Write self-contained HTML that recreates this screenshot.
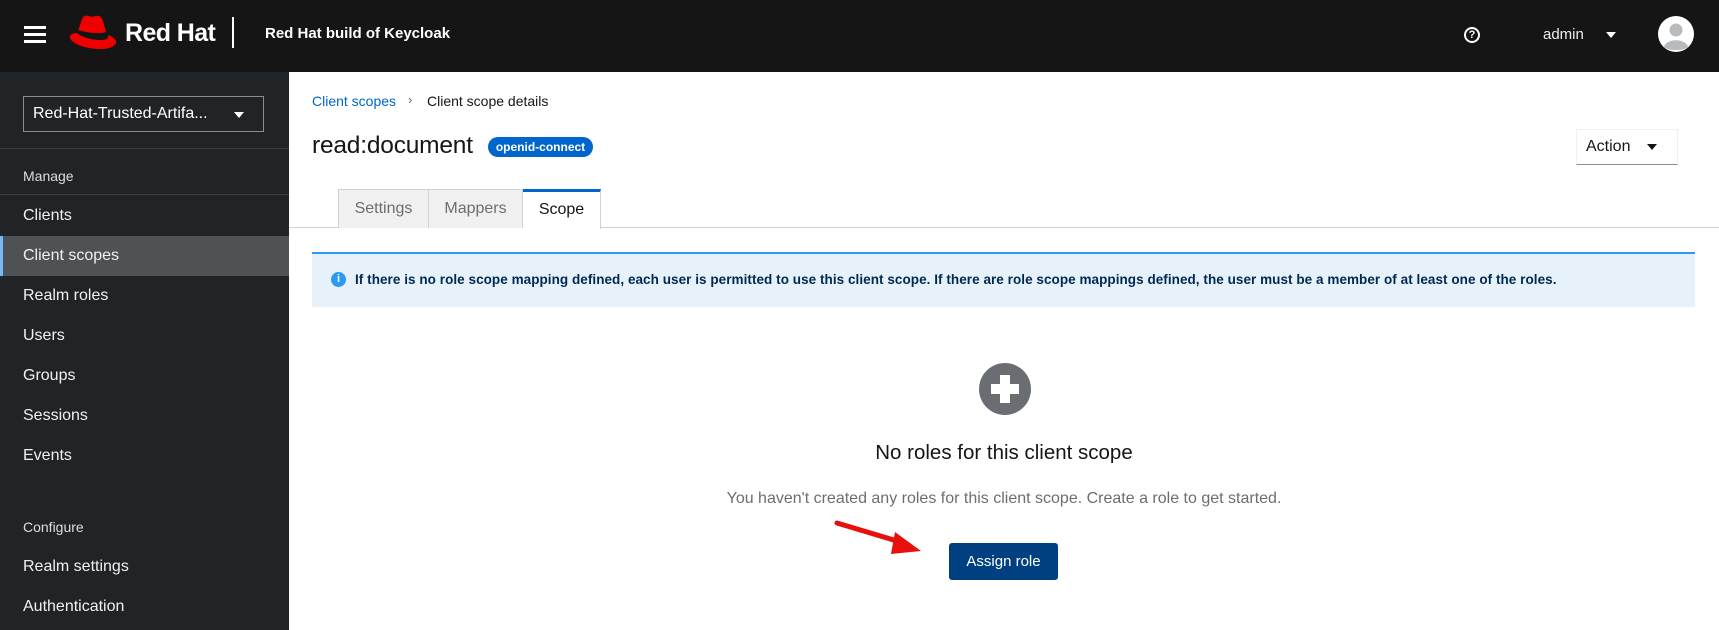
<!DOCTYPE html>
<html><head><style>
*{box-sizing:border-box;margin:0;padding:0}
body{width:1719px;height:630px;overflow:hidden;font-family:"Liberation Sans",sans-serif;background:#fff;position:relative}
.hdr{position:absolute;left:0;top:0;width:1719px;height:72px;background:#151515;color:#fff}
.abs{position:absolute}
.side{position:absolute;left:0;top:72px;width:289px;height:558px;background:#212427;color:#fff}
.nav{position:absolute;left:23px;font-size:16px;color:#f0f0f0}
.main{position:absolute;left:289px;top:72px;width:1430px;height:558px}
</style></head><body>
<div class="hdr">
  <div class="abs" style="left:24px;top:26px;width:22px;height:3px;background:#fff;box-shadow:0 7px 0 #fff,0 14px 0 #fff"></div>
  <svg class="abs" style="left:68px;top:14px" width="50" height="36" viewBox="0 0 50 36">
    <path d="M9 19 C4 19 1 21 2 24 C4 30 18 35 32 35 C44 35 49 31 48 27 C47 24 43 22 40 21 C41 25 38 26 33 26 C22 26 12 22 9 19Z" fill="#e00"/>
    <path d="M10 17 L14 5 C15 2 18 1 21 2 C23 3 25 3 27 2 C31 1 34 3 35 7 L38 18 C35 20 30 20 23 19 C17 18 13 18 10 17Z" fill="#e00"/>
    <path d="M9 17 C14 21 27 24 39 21 L39 18 C31 20 19 19 10 16Z" fill="#151515"/>
  </svg>
  <div class="abs" style="left:125px;top:19px;font-size:25px;font-weight:bold;letter-spacing:-0.6px">Red Hat</div>
  <div class="abs" style="left:232px;top:17px;width:2px;height:31px;background:#fff"></div>
  <div class="abs" style="left:265px;top:25px;font-size:15px;font-weight:bold">Red Hat build of Keycloak</div>
  <div class="abs" style="left:1464px;top:27px;width:16px;height:16px;border:2px solid #fff;border-radius:50%;font-size:11px;font-weight:bold;text-align:center;line-height:12px">?</div>
  <div class="abs" style="left:1543px;top:26px;font-size:15px;color:#eee">admin</div>
  <div class="abs" style="left:1606px;top:32px;border-left:5px solid transparent;border-right:5px solid transparent;border-top:6px solid #fff"></div>
  <svg class="abs" style="left:1658px;top:16px" width="36" height="36" viewBox="0 0 36 36"><circle cx="18" cy="18" r="18" fill="#fff"/><circle cx="18" cy="14" r="6.5" fill="#b8bbbe"/><path d="M6 31 C8 22 28 22 30 31 C26 35 10 35 6 31Z" fill="#b8bbbe"/></svg>
</div>
<div class="side">
  <div class="abs" style="left:23px;top:24px;width:241px;height:36px;border:1px solid #8a8d90;font-size:16px;padding:8px 9px;color:#fff">Red-Hat-Trusted-Artifa...</div>
  <div class="abs" style="left:234px;top:40px;border-left:5px solid transparent;border-right:5px solid transparent;border-top:6px solid #fff"></div>
  <div class="abs" style="left:0;top:76px;width:289px;height:1px;background:#3c3f42"></div>
  <div class="nav" style="top:96px;font-size:14px;color:#ddd">Manage</div>
  <div class="abs" style="left:0;top:122px;width:289px;height:1px;background:#3c3f42"></div>
  <div class="nav" style="top:135px">Clients</div>
  <div class="abs" style="left:0;top:164px;width:289px;height:40px;background:#4f5255;border-left:3px solid #73bcf7"></div>
  <div class="nav" style="top:175px">Client scopes</div>
  <div class="nav" style="top:215px">Realm roles</div>
  <div class="nav" style="top:255px">Users</div>
  <div class="nav" style="top:295px">Groups</div>
  <div class="nav" style="top:335px">Sessions</div>
  <div class="nav" style="top:375px">Events</div>
  <div class="nav" style="top:447px;font-size:14px;color:#ddd">Configure</div>
  <div class="nav" style="top:486px">Realm settings</div>
  <div class="nav" style="top:526px">Authentication</div>
</div>
<div class="main">
  <div class="abs" style="left:23px;top:21px;font-size:14px;color:#06c">Client scopes</div>
  <div class="abs" style="left:119px;top:20px;font-size:13px;color:#6a6e73">›</div>
  <div class="abs" style="left:138px;top:21px;font-size:14px;color:#151515">Client scope details</div>
  <div class="abs" style="left:23px;top:60px;font-size:24.5px;color:#151515;letter-spacing:-0.2px">read:document</div>
  <div class="abs" style="left:199px;top:65px;width:105px;height:20px;border-radius:10px;background:#06c;color:#fff;font-size:12px;font-weight:bold;text-align:center;line-height:20px">openid-connect</div>
  <div class="abs" style="left:1287px;top:57px;width:102px;height:36px;border:1px solid #f0f0f0;border-bottom:1px solid #8a8d90;font-size:16px;padding:8px 9px;color:#151515">Action</div>
  <div class="abs" style="left:1358px;top:72px;border-left:5px solid transparent;border-right:5px solid transparent;border-top:6px solid #151515"></div>
  <div class="abs" style="left:0;top:155px;width:1430px;height:1px;background:#d2d2d2"></div>
  <div class="abs" style="left:49px;top:117px;width:91px;height:39px;background:#f0f0f0;border:1px solid #d2d2d2;border-bottom:none;font-size:16px;color:#6a6e73;text-align:center;line-height:38px">Settings</div>
  <div class="abs" style="left:140px;top:117px;width:94px;height:39px;background:#f0f0f0;border:1px solid #d2d2d2;border-left:none;border-bottom:none;font-size:16px;color:#6a6e73;text-align:center;line-height:38px">Mappers</div>
  <div class="abs" style="left:234px;top:117px;width:78px;height:40px;background:#fff;border-top:3px solid #06c;border-right:1px solid #d2d2d2;font-size:16px;color:#151515;text-align:center;line-height:36px">Scope</div>
  <div class="abs" style="left:23px;top:180px;width:1383px;height:55px;background:#e7f1fa;border-top:2px solid #2b9af3"></div>
  <div class="abs" style="left:42px;top:200px;width:15px;height:15px;border-radius:50%;background:#2b9af3;color:#fff;font-size:11px;font-weight:bold;text-align:center;line-height:15px">i</div>
  <div class="abs" style="left:66px;top:200px;font-size:13.5px;font-weight:bold;color:#002952;white-space:nowrap;letter-spacing:0.05px">If there is no role scope mapping defined, each user is permitted to use this client scope. If there are role scope mappings defined, the user must be a member of at least one of the roles.</div>
  <svg class="abs" style="left:689px;top:290px" width="54" height="54" viewBox="0 0 54 54"><circle cx="27" cy="27" r="26" fill="#6a6e73"/><rect x="22" y="13" width="10" height="28" fill="#fff"/><rect x="13" y="22" width="28" height="10" fill="#fff"/></svg>
  <div class="abs" style="left:0;top:369px;width:1430px;text-align:center;font-size:20.5px;color:#151515">No roles for this client scope</div>
  <div class="abs" style="left:0;top:418px;width:1430px;text-align:center;font-size:16px;color:#6a6e73">You haven't created any roles for this client scope. Create a role to get started.</div>
  <div class="abs" style="left:660px;top:471px;width:109px;height:37px;background:#004080;border-radius:3px;color:#fff;font-size:15px;text-align:center;line-height:37px">Assign role</div>
  <svg class="abs" style="left:540px;top:440px" width="100" height="50" viewBox="0 0 100 50"><path d="M8 11 L78 32" stroke="#e8100c" stroke-width="5" stroke-linecap="round"/><path d="M66 20 L92 39 L62 42 Z" fill="#e8100c"/></svg>
</div>
</body></html>
